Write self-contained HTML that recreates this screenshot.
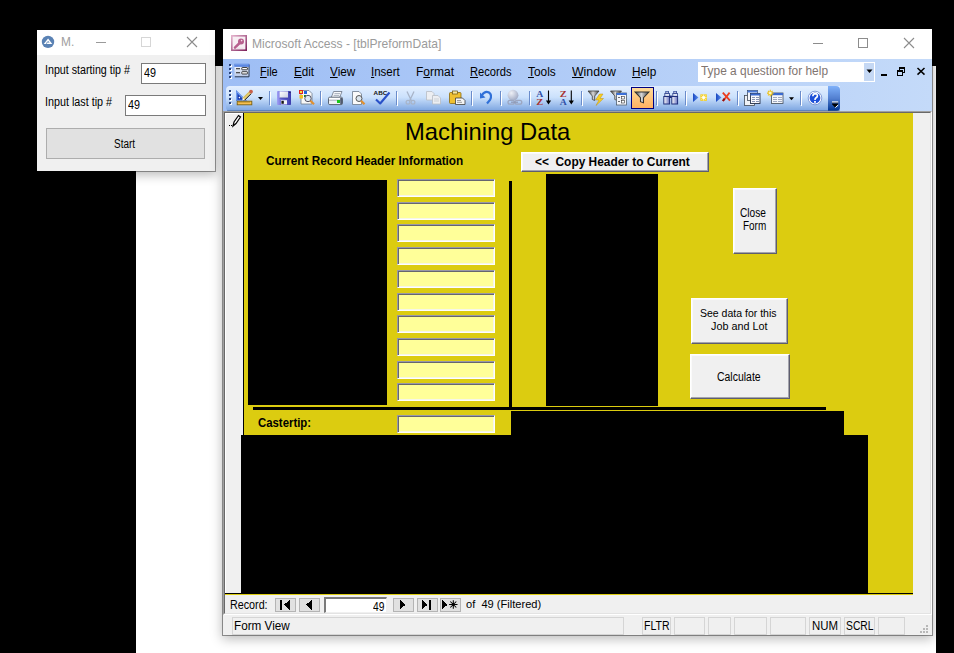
<!DOCTYPE html>
<html><head><meta charset="utf-8">
<style>
html{background:#000}
*{box-sizing:border-box;margin:0;padding:0}
body{width:954px;height:653px;background:#000;position:relative;overflow:hidden;font-family:"Liberation Sans",sans-serif}
.a{position:absolute}
.t{position:absolute;white-space:pre;line-height:1}
u{text-decoration:underline;text-underline-offset:1px}
</style></head><body>
<div class="a" style="left:136px;top:66px;width:800px;height:587px;background:#fff"></div>
<div class="a" style="left:36px;top:29px;width:180px;height:143px;background:#f0f0f0;background-clip:padding-box;border:1px solid rgba(0,0,0,.36);box-shadow:0 3px 10px rgba(0,0,0,.27)"></div>
<div class="a" style="left:37px;top:30px;width:178px;height:25px;background:#fff"></div>
<svg class="a" style="left:41px;top:35px;" width="14" height="14" viewBox="0 0 14 14"><circle cx="7" cy="6.9" r="6.2" fill="#5a82b4"/><path d="M2.7 9 L7.1 3.5 L11.3 9 Z" fill="#fff"/><path d="M5.6 7.6 L7.1 5.9 L8.6 7.6 Z" fill="#5a82b4"/><path d="M5.9 7.3 L5.4 9.3" stroke="#5a82b4" stroke-width="0.7"/></svg>
<span class="t" style="left:61.0px;top:35.63px;font-size:12.2px;color:#a0a0a0;transform:scaleX(0.9739);transform-origin:0 0;">M.</span>
<div class="a" style="left:96px;top:42px;width:10px;height:1px;background:#9a9a9a"></div>
<div class="a" style="left:141px;top:37px;width:10px;height:10px;border:1px solid #d6d6d6"></div>
<svg class="a" style="left:186px;top:36px;" width="12" height="12" viewBox="0 0 12 12"><path d="M1 1 L11 11 M11 1 L1 11" stroke="#8c8c8c" stroke-width="1.1"/></svg>
<span class="t" style="left:45.0px;top:63.75px;font-size:12.3px;color:#000;transform:scaleX(0.8693);transform-origin:0 0;">Input starting tip #</span>
<div class="a" style="left:141px;top:63px;width:65px;height:21px;background:#fff;border:1px solid #7a7a7a"></div>
<span class="t" style="left:144.1px;top:67.03px;font-size:12.2px;color:#000;transform:scaleX(0.8843);transform-origin:0 0;">49</span>
<span class="t" style="left:45.0px;top:95.95px;font-size:12.3px;color:#000;transform:scaleX(0.8749);transform-origin:0 0;">Input last tip #</span>
<div class="a" style="left:125px;top:95px;width:81px;height:21px;background:#fff;border:1px solid #7a7a7a"></div>
<span class="t" style="left:127.9px;top:98.83px;font-size:12.2px;color:#000;transform:scaleX(0.8843);transform-origin:0 0;">49</span>
<div class="a" style="left:46px;top:128px;width:159px;height:31px;background:#e1e1e1;border:1px solid #adadad"></div>
<span class="t" style="left:114.2px;top:137.90px;font-size:12px;color:#000;transform:scaleX(0.8286);transform-origin:0 0;">Start</span>
<div class="a" style="left:222px;top:28px;width:711px;height:608px;background:#f0f0f0;background-clip:padding-box;border:1px solid rgba(0,0,0,.38);box-shadow:0 3px 11px rgba(0,0,0,.27)"></div>
<div class="a" style="left:223px;top:29px;width:709px;height:30px;background:#fff"></div>
<svg class="a" style="left:231px;top:35px;" width="16" height="16" viewBox="0 0 16 16"><defs><linearGradient id="akf" x1="0" y1="0" x2="1" y2="1"><stop offset="0" stop-color="#e8b8d0"/><stop offset="1" stop-color="#7a1c58"/></linearGradient></defs><rect x="0" y="0" width="16" height="16" fill="url(#akf)"/><rect x="1.6" y="1.6" width="12.8" height="12.8" fill="#f7eef3"/><circle cx="10" cy="6.4" r="3" fill="#b8608e"/><path d="M9 7.6 L4 12.6" stroke="#b8608e" stroke-width="2.6" stroke-linecap="round"/><circle cx="10.6" cy="5.6" r="0.8" fill="#f4dde9"/><path d="M5.5 13.2 L12.5 13.2" stroke="#eadbe4" stroke-width="1"/></svg>
<span class="t" style="left:252.4px;top:37.93px;font-size:12.2px;color:#9b9b9b;transform:scaleX(0.9912);transform-origin:0 0;">Microsoft Access - [tblPreformData]</span>
<div class="a" style="left:813px;top:43px;width:10px;height:1px;background:#8c8c8c"></div>
<div class="a" style="left:858px;top:38px;width:10px;height:10px;border:1px solid #8c8c8c"></div>
<svg class="a" style="left:903px;top:37px;" width="12" height="12" viewBox="0 0 12 12"><path d="M1 1 L11 11 M11 1 L1 11" stroke="#8c8c8c" stroke-width="1.1"/></svg>
<div class="a" style="left:223px;top:59px;width:709px;height:52px;background:linear-gradient(to right,#9ebef5,#c4daf9)"></div>
<div class="a" style="left:229px;top:64px;width:2px;height:2px;background:#27417a;box-shadow:1px 1px 0 #fff"></div>
<div class="a" style="left:229px;top:68px;width:2px;height:2px;background:#27417a;box-shadow:1px 1px 0 #fff"></div>
<div class="a" style="left:229px;top:72px;width:2px;height:2px;background:#27417a;box-shadow:1px 1px 0 #fff"></div>
<div class="a" style="left:229px;top:76px;width:2px;height:2px;background:#27417a;box-shadow:1px 1px 0 #fff"></div>
<svg class="a" style="left:234px;top:63px;" width="16" height="15" viewBox="0 0 16 15"><defs><linearGradient id="fi" x1="0" y1="0" x2="0" y2="1"><stop offset="0" stop-color="#fff"/><stop offset="1" stop-color="#b8c8e8"/></linearGradient></defs><rect x="0.5" y="1" width="14.5" height="12.8" fill="url(#fi)"/><path d="M15 1.5 V13.8 H0.8" stroke="#27364e" stroke-width="1" fill="none"/><rect x="0.3" y="0.8" width="14.9" height="3" fill="#4878dc"/><rect x="1" y="1.4" width="13.5" height="0.9" fill="#8cb0f0"/><rect x="2" y="5" width="4" height="1.3" fill="#505050"/><rect x="2" y="9" width="4" height="1.3" fill="#505050"/><rect x="7.8" y="4.5" width="5.6" height="2.3" rx="0.5" fill="#fff" stroke="#2a2a2a" stroke-width="0.9"/><rect x="7.8" y="8.7" width="5.6" height="2.3" rx="0.5" fill="#fff" stroke="#2a2a2a" stroke-width="0.9"/></svg>
<span class="t" style="left:260.4px;top:65.90px;font-size:12px;color:#000;transform:scaleX(0.9153);transform-origin:0 0;"><u>F</u>ile</span>
<span class="t" style="left:293.8px;top:65.90px;font-size:12px;color:#000;transform:scaleX(0.9720);transform-origin:0 0;"><u>E</u>dit</span>
<span class="t" style="left:329.6px;top:65.90px;font-size:12px;color:#000;transform:scaleX(0.9808);transform-origin:0 0;"><u>V</u>iew</span>
<span class="t" style="left:371.1px;top:65.90px;font-size:12px;color:#000;transform:scaleX(0.9596);transform-origin:0 0;"><u>I</u>nsert</span>
<span class="t" style="left:416px;top:65.90px;font-size:12px;color:#000;">F<u>o</u>rmat</span>
<span class="t" style="left:470.4px;top:65.90px;font-size:12px;color:#000;transform:scaleX(0.9287);transform-origin:0 0;"><u>R</u>ecords</span>
<span class="t" style="left:528px;top:65.90px;font-size:12px;color:#000;transform:scaleX(0.9888);transform-origin:0 0;"><u>T</u>ools</span>
<span class="t" style="left:571.9px;top:65.90px;font-size:12px;color:#000;transform:scaleX(1.0262);transform-origin:0 0;"><u>W</u>indow</span>
<span class="t" style="left:631.8px;top:65.90px;font-size:12px;color:#000;transform:scaleX(0.9805);transform-origin:0 0;"><u>H</u>elp</span>
<div class="a" style="left:698px;top:62px;width:177px;height:20px;background:#fff"></div>
<div class="a" style="left:863px;top:62px;width:12px;height:20px;background:#c5d8f4;border:1px solid #fff"></div>
<svg class="a" style="left:866px;top:69px;" width="7" height="5" viewBox="0 0 7 5"><path d="M0.5 0.5 L6.5 0.5 L3.5 4 Z" fill="#000"/></svg>
<span class="t" style="left:700.6px;top:65.10px;font-size:12px;color:#80746f;transform:scaleX(0.9915);transform-origin:0 0;">Type a question for help</span>
<div class="a" style="left:881px;top:74px;width:6px;height:2px;background:#000"></div>
<svg class="a" style="left:896px;top:66px;" width="10" height="11" viewBox="0 0 10 11" shape-rendering="crispEdges"><rect x="3" y="1" width="6" height="2" fill="#000"/><rect x="3" y="1" width="1" height="4" fill="#000"/><rect x="8" y="1" width="1" height="6" fill="#000"/><rect x="6" y="6" width="3" height="1" fill="#000"/><rect x="1" y="4" width="6" height="6" fill="#c4daf9"/><rect x="1" y="4" width="6" height="2" fill="#000"/><rect x="1" y="4" width="1" height="6" fill="#000"/><rect x="6" y="4" width="1" height="6" fill="#000"/><rect x="1" y="9" width="6" height="1" fill="#000"/></svg>
<svg class="a" style="left:916px;top:67px;" width="10" height="9" viewBox="0 0 10 9"><path d="M1.5 1 L8.5 7.6 M8.5 1 L1.5 7.6" stroke="#000" stroke-width="1.5"/></svg>
<div class="a" style="left:226px;top:86px;width:614px;height:25px;border-radius:4px 0 0 4px;background:linear-gradient(to bottom,#e3efff 0%,#cbe1fc 45%,#7ba4e0 100%)"></div>
<div class="a" style="left:828px;top:86px;width:12px;height:25px;border-radius:0 4px 4px 0;background:linear-gradient(to bottom,#7fb1fa 0%,#527fd0 50%,#003591 100%)"></div>
<div class="a" style="left:227px;top:110px;width:612px;height:1px;background:#3b619c;opacity:.5"></div>
<div class="a" style="left:229px;top:90px;width:2px;height:2px;background:#27417a;box-shadow:1px 1px 0 #fff"></div>
<div class="a" style="left:229px;top:94px;width:2px;height:2px;background:#27417a;box-shadow:1px 1px 0 #fff"></div>
<div class="a" style="left:229px;top:98px;width:2px;height:2px;background:#27417a;box-shadow:1px 1px 0 #fff"></div>
<div class="a" style="left:229px;top:102px;width:2px;height:2px;background:#27417a;box-shadow:1px 1px 0 #fff"></div>
<svg class="a" style="left:830px;top:99px;" width="12" height="10" viewBox="0 0 12 10"><rect x="2" y="2.4" width="6.2" height="1.3" fill="#fff"/><rect x="2" y="3.7" width="6.2" height="0.8" fill="#000"/><path d="M1.8 5 L8.4 5 L5.1 8.4 Z" fill="#000"/><path d="M5.3 8.6 L8.2 6" stroke="#fff" stroke-width="1"/></svg>
<div class="a" style="left:269px;top:91px;width:1px;height:14px;background:#6a8ccb;box-shadow:1px 1px 0 #fff"></div>
<div class="a" style="left:320px;top:91px;width:1px;height:14px;background:#6a8ccb;box-shadow:1px 1px 0 #fff"></div>
<div class="a" style="left:396px;top:91px;width:1px;height:14px;background:#6a8ccb;box-shadow:1px 1px 0 #fff"></div>
<div class="a" style="left:471px;top:91px;width:1px;height:14px;background:#6a8ccb;box-shadow:1px 1px 0 #fff"></div>
<div class="a" style="left:500px;top:91px;width:1px;height:14px;background:#6a8ccb;box-shadow:1px 1px 0 #fff"></div>
<div class="a" style="left:529px;top:91px;width:1px;height:14px;background:#6a8ccb;box-shadow:1px 1px 0 #fff"></div>
<div class="a" style="left:581px;top:91px;width:1px;height:14px;background:#6a8ccb;box-shadow:1px 1px 0 #fff"></div>
<div class="a" style="left:656px;top:91px;width:1px;height:14px;background:#6a8ccb;box-shadow:1px 1px 0 #fff"></div>
<div class="a" style="left:685px;top:91px;width:1px;height:14px;background:#6a8ccb;box-shadow:1px 1px 0 #fff"></div>
<div class="a" style="left:737px;top:91px;width:1px;height:14px;background:#6a8ccb;box-shadow:1px 1px 0 #fff"></div>
<div class="a" style="left:800px;top:91px;width:1px;height:14px;background:#6a8ccb;box-shadow:1px 1px 0 #fff"></div>
<svg class="a" style="left:0;top:0" width="954" height="653" viewBox="0 0 954 653"><path d="M236 90 L236 101 L247 101 Z" fill="#3a6ad8"/><path d="M236.6 91.6 L236.6 100.4 L245.4 100.4 Z" fill="none" stroke="#90b8f8" stroke-width="0.7"/><path d="M237.8 94.4 L237.8 99.4 L242.8 99.4 Z" fill="#1a38a8"/><circle cx="239.4" cy="97.6" r="0.8" fill="#fff"/><path d="M243.2 99.3 L250.2 92.3" stroke="#e8d070" stroke-width="3"/><path d="M244.6 100.2 L251.2 93.6" stroke="#111" stroke-width="1"/><path d="M243.6 97.8 L249.8 91.6" stroke="#a89040" stroke-width="0.5"/><circle cx="251" cy="91.6" r="1.9" fill="#c8604a"/><path d="M242 100.6 L243.2 98.2 L244.6 99.6 Z" fill="#fff"/><rect x="237.2" y="101.2" width="14.6" height="3.6" fill="#f8c050" stroke="#7a6010" stroke-width="0.9"/><path d="M239 101.6v1.2M241 101.6v1.2M243 101.6v1.2M245 101.6v1.2M247 101.6v1.2M249 101.6v1.2" stroke="#8a6a10" stroke-width="0.8"/><path d="M258 97 L263 97 L260.5 100 Z" fill="#000"/><defs><linearGradient id="svg1" x1="0" x2="1"><stop offset="0" stop-color="#a0a0f4"/><stop offset=".35" stop-color="#6a6ad8"/><stop offset="1" stop-color="#3c3cae"/></linearGradient><linearGradient id="svl" x1="0" y1="0" x2="1" y2="1"><stop offset="0" stop-color="#fff"/><stop offset="1" stop-color="#c8cce0"/></linearGradient></defs><rect x="277" y="91" width="14" height="14" rx="0.8" fill="url(#svg1)"/><rect x="279.6" y="91.4" width="8.4" height="6.6" fill="url(#svl)"/><rect x="279.6" y="97.6" width="8.4" height="0.8" fill="#3a3aa0"/><rect x="281" y="100.2" width="6" height="4.2" fill="#f0f2f8"/><rect x="281.4" y="100.8" width="2.4" height="3" fill="#151515"/><rect x="289.4" y="92" width="1" height="1" fill="#222"/><path d="M301 90.5 H309 L312 93.5 V104 H301 Z" fill="#f8f8f8" stroke="#6c7a8c" stroke-width="0.8"/><rect x="299" y="90" width="4" height="4" fill="#e02020"/><rect x="300" y="91" width="2" height="2" fill="#f0e040"/><rect x="304" y="91" width="3" height="3" fill="#2060e0"/><rect x="299.5" y="95" width="3.5" height="3.5" fill="#f0c020"/><rect x="304" y="95" width="2" height="2" fill="#208020"/><circle cx="308" cy="98.5" r="3.2" fill="#dce6f0" stroke="#556" stroke-width="1"/><path d="M310.3 100.8 L314 104.3" stroke="#e09030" stroke-width="2.2"/><path d="M333.6 91.5 L342 91.5 L339.6 97.6 L331.2 97.6 Z" fill="#f6f8fb" stroke="#6a7484" stroke-width="0.8"/><path d="M334.5 93.6h5.5M333.7 95.4h5.5" stroke="#8a94a4" stroke-width="0.7"/><rect x="328.5" y="97.2" width="14" height="7.4" rx="1.3" fill="#eef1f6" stroke="#4e5868" stroke-width="0.9"/><rect x="329.2" y="97.9" width="12.6" height="1.6" fill="#fff"/><path d="M329.2 100.2h12.6" stroke="#7a8494" stroke-width="0.6"/><rect x="340.2" y="98" width="2" height="6" fill="#505a70"/><rect x="337" y="100" width="3" height="3" fill="#18c818"/><path d="M352.5 91.5 H359 L361.5 94 V104.5 H352.5 Z" fill="#fafafa" stroke="#6c7a8c" stroke-width="0.8"/><circle cx="359" cy="98.5" r="3" fill="#dde6ee" stroke="#555" stroke-width="1"/><path d="M361 100.7 L364.5 104.3" stroke="#e09030" stroke-width="2.2"/><text x="373.6" y="95" font-family="Liberation Sans" font-weight="700" font-size="6.2" fill="#111" textLength="13.6" lengthAdjust="spacingAndGlyphs">ABC</text><path d="M376 99.5 L380.2 103.5 L389.5 92.5" stroke="#2850c8" stroke-width="2.1" fill="none" stroke-linejoin="round"/><path d="M407 91.5 L411.5 101 M414 91.5 L409.5 101" stroke="#a8b4c8" stroke-width="1.3" fill="none"/><circle cx="408" cy="102.3" r="1.9" fill="none" stroke="#a8b4c8" stroke-width="1.2"/><circle cx="413" cy="102.3" r="1.9" fill="none" stroke="#a8b4c8" stroke-width="1.2"/><path d="M426.5 91.5 H432 L434 93.5 V100 H426.5 Z" fill="#eceef2" stroke="#b8bcc4" stroke-width="0.8"/><path d="M432.5 95.5 H438 L440.5 98 V104 H432.5 Z" fill="#eceef2" stroke="#b8bcc4" stroke-width="0.8"/><path d="M434 99h5M434 101h5" stroke="#c0c4cc" stroke-width="0.7"/><rect x="449.5" y="92.5" width="11.5" height="11" rx="1" fill="#f0c030" stroke="#8a6a10" stroke-width="0.8"/><rect x="452.5" y="91" width="5" height="3" fill="#f8e8a0" stroke="#6a5010" stroke-width="0.7"/><path d="M455.5 98 H462.5 L465 100.5 V104.5 H455.5 Z" fill="#f4f4f4" stroke="#404040" stroke-width="0.8"/><path d="M457 100.5h4M457 102.3h5" stroke="#777" stroke-width="0.7"/><path d="M482 95 Q485 90.5 489 92.5 Q492.5 95 490 100 L487 103.5" stroke="#3070d8" stroke-width="2.2" fill="none"/><path d="M480 92.5 L480 98.5 L485.5 97.5 Z" fill="#3070d8"/><defs><radialGradient id="glb" cx="0.35" cy="0.3" r="0.8"><stop offset="0" stop-color="#eef0f6"/><stop offset="1" stop-color="#9aa4c0"/></radialGradient></defs><circle cx="513" cy="95.2" r="5.4" fill="url(#glb)"/><rect x="508" y="100.3" width="6.4" height="3.8" rx="1.9" fill="none" stroke="#9ca6c0" stroke-width="1.3"/><rect x="515" y="100.3" width="6.8" height="3.8" rx="1.9" fill="none" stroke="#9ca6c0" stroke-width="1.3"/><path d="M511 102.2h7" stroke="#8e98b4" stroke-width="1.2"/><text x="536.2" y="96.7" font-family="Liberation Serif" font-weight="700" font-size="9" fill="#3050a8" textLength="7" lengthAdjust="spacingAndGlyphs">A</text><text x="536.2" y="104.7" font-family="Liberation Serif" font-weight="700" font-size="9" fill="#a83434" textLength="7" lengthAdjust="spacingAndGlyphs">Z</text><path d="M548.5 90.5 V103" stroke="#000" stroke-width="1.1"/><path d="M545.9 100.5 L551.1 100.5 L548.5 104.5 Z" fill="#000"/><text x="559.7" y="96.7" font-family="Liberation Serif" font-weight="700" font-size="9" fill="#a83434" textLength="7" lengthAdjust="spacingAndGlyphs">Z</text><text x="559.7" y="104.7" font-family="Liberation Serif" font-weight="700" font-size="9" fill="#3050a8" textLength="7" lengthAdjust="spacingAndGlyphs">A</text><path d="M571.3 90.5 V103" stroke="#000" stroke-width="1.1"/><path d="M568.6999999999999 100.5 L573.9 100.5 L571.3 104.5 Z" fill="#000"/><defs><linearGradient id="fg" x1="0" x2="1"><stop offset="0" stop-color="#303030"/><stop offset=".45" stop-color="#d8d8d8"/><stop offset="1" stop-color="#404040"/></linearGradient></defs><g transform="translate(588,91) scale(1.0)"><defs></defs><path d="M0 0 H11 L6.7 5 V9.5 L4.3 8.5 V5 Z" fill="url(#fg)" stroke="#404040" stroke-width="0.8"/></g><path d="M599.5 94 L595.5 100 L599 100 L596 105.5 L603.5 98.5 L600 98.5 L603 94 Z" fill="#f8d020" stroke="#c09010" stroke-width="0.5"/><g transform="translate(610.5,91) scale(1.0)"><defs></defs><path d="M0 0 H11 L6.7 5 V9.5 L4.3 8.5 V5 Z" fill="url(#fg)" stroke="#404040" stroke-width="0.8"/></g><rect x="616.5" y="93" width="10" height="12" fill="#f4f6fa" stroke="#506070" stroke-width="0.8"/><rect x="616.5" y="93" width="10" height="2" fill="#3a70d8"/><rect x="621.5" y="96.5" width="3" height="2.5" fill="#fff" stroke="#333" stroke-width="0.6"/><rect x="621.5" y="100.5" width="3" height="2.5" fill="#fff" stroke="#333" stroke-width="0.6"/><path d="M618 97.5h2M618 101.5h2" stroke="#333" stroke-width="0.7"/><defs><linearGradient id="og" x1="0" y1="0" x2="0" y2="1"><stop offset="0" stop-color="#ffdc9a"/><stop offset="1" stop-color="#ffb060"/></linearGradient></defs><rect x="631.5" y="87.5" width="22" height="21" fill="url(#og)" stroke="#000080" stroke-width="1"/><g transform="translate(635,92) scale(1.27,1.15)"><path d="M0 0 H11 L6.7 5 V9.5 L4.3 8.5 V5 Z" fill="url(#fg)" stroke="#303030" stroke-width="0.8"/></g><defs><linearGradient id="bg1" x1="0" x2="1"><stop offset="0" stop-color="#fff"/><stop offset="1" stop-color="#6a74c0"/></linearGradient></defs><rect x="665.3" y="91" width="3.6" height="2.8" fill="#3a52a0"/><rect x="666.4" y="91.7" width="1.3" height="1.2" fill="#fff"/><rect x="664.8" y="93.5" width="4.8" height="2.8" fill="#dfe6f4" stroke="#2a3e8a" stroke-width="0.8"/><rect x="663.8" y="96.5" width="5.8" height="7.5" fill="url(#bg1)" stroke="#1e2e7a" stroke-width="1"/><rect x="673.3" y="91" width="3.6" height="2.8" fill="#3a52a0"/><rect x="674.4" y="91.7" width="1.3" height="1.2" fill="#fff"/><rect x="672.8" y="93.5" width="4.8" height="2.8" fill="#dfe6f4" stroke="#2a3e8a" stroke-width="0.8"/><rect x="671.8" y="96.5" width="5.8" height="7.5" fill="url(#bg1)" stroke="#1e2e7a" stroke-width="1"/><rect x="669" y="95.5" width="2.8" height="2.5" fill="#1e2e7a"/><defs><linearGradient id="tri" x1="0" x2="1"><stop offset="0" stop-color="#1a48c0"/><stop offset="1" stop-color="#5a90f0"/></linearGradient></defs><path d="M693 93 L693 102 L698.5 97.5 Z" fill="url(#tri)"/><rect x="700.3" y="94.3" width="6.6" height="6.6" fill="#f4d030"/><g stroke="#fff8c8" stroke-width="0.8"><path d="M703.6 94.6 V100.6 M700.6 97.6 H706.6 M701.5 95.5 L705.7 99.7 M705.7 95.5 L701.5 99.7"/></g><circle cx="703.6" cy="97.6" r="1.3" fill="#fff"/><path d="M716 93 L716 102 L721.5 97.5 Z" fill="url(#tri)"/><path d="M722.8 92.6 L730 100.6" stroke="#e83a20" stroke-width="1.8"/><path d="M729.6 92.6 L723 101" stroke="#f04020" stroke-width="1.8"/><path d="M724.6 98.6 L722.8 101" stroke="#901010" stroke-width="2"/><rect x="744.5" y="95.5" width="10" height="10" fill="#f0f2f6" stroke="#404a58" stroke-width="0.8"/><rect x="747.5" y="90.5" width="10" height="10" fill="#f4f6fa" stroke="#404a58" stroke-width="0.8"/><rect x="747.5" y="90.5" width="10" height="2" fill="#4a7ad8"/><rect x="750.5" y="93.5" width="9.5" height="10" fill="#f8f8fc" stroke="#26324a" stroke-width="0.9"/><rect x="750.5" y="93.5" width="9.5" height="2" fill="#3a6ad0"/><path d="M752 97.5h3M756 97.5h3M752 99.5h3M756 99.5h3M752 101.5h3M756 101.5h3" stroke="#6a7aa0" stroke-width="0.8"/><rect x="771.5" y="93" width="11.5" height="10.5" fill="#f4f6fa" stroke="#404a58" stroke-width="0.8"/><rect x="771.5" y="93" width="11.5" height="2.2" fill="#3a6ad0"/><path d="M773 97.5h4M778 97.5h4M773 99.5h4M778 99.5h4M773 101.5h4M778 101.5h4" stroke="#8a96b0" stroke-width="0.8"/><g stroke="#f0c010" stroke-width="1.1"><path d="M770.3 89.8 V96.4 M767 93.1 H773.6 M768 90.8 L772.6 95.4 M772.6 90.8 L768 95.4"/></g><circle cx="770.3" cy="93.1" r="1.4" fill="#fff8c0"/><path d="M789 97.2 L794 97.2 L791.5 100.2 Z" fill="#000"/><circle cx="815" cy="98" r="6.8" fill="#fff" stroke="#5a7ac8" stroke-width="0.7"/><circle cx="815" cy="98" r="5.4" fill="#1e50d8"/><path d="M812.8 96.2 Q813 93.6 815.2 93.6 Q817.6 93.8 817.4 96 Q817.2 97.2 815.8 98 Q815 98.6 815 100" stroke="#fff" stroke-width="1.6" fill="none"/><rect x="814.1" y="101" width="1.8" height="1.8" fill="#fff"/></svg>
<div class="a" style="left:223px;top:111px;width:709px;height:504px;background:#f0f0f0;border-top:1px solid #a0a0a0;border-left:1px solid #a0a0a0;border-right:1px solid #fff;border-bottom:1px solid #fff"></div>
<div class="a" style="left:224px;top:112px;width:707px;height:502px;border-top:1px solid #696969;border-left:1px solid #696969;border-right:1px solid #e3e3e3;border-bottom:1px solid #e3e3e3"></div>
<div class="a" style="left:225px;top:113px;width:18px;height:480px;background:#f0f0f0;border-top:1px solid #fff;border-left:1px solid #fff"></div>
<div class="a" style="left:243px;top:113px;width:1px;height:480px;background:#000"></div>
<svg class="a" style="left:228px;top:114px;" width="14" height="14" viewBox="0 0 14 14" shape-rendering="crispEdges"><path d="M1 11h1v1h-1zM3 11h1v1h-1z" fill="#000"/><path d="M5 12 L6 8 L10.5 1.5 L12.5 3 L8 9.5 Z" fill="#fff" stroke="#000" stroke-width="1.2" shape-rendering="auto"/></svg>
<div class="a" style="left:244px;top:113px;width:669px;height:480px;background:#dccc10"></div>
<div class="a" style="left:225px;top:593px;width:688px;height:1px;background:#000"></div>
<div class="a" style="left:225px;top:594px;width:688px;height:1px;background:#dccc10"></div>
<span class="t" style="left:405.0px;top:119.87px;font-size:23.8px;color:#000;">Machining Data</span>
<span class="t" style="left:266.2px;top:153.95px;font-size:13px;font-weight:700;color:#000;transform:scaleX(0.9040);transform-origin:0 0;">Current Record Header Information</span>
<div class="a" style="left:521px;top:152px;width:188px;height:20px;background:#f0f0f0;border-top:1px solid #fff;border-left:1px solid #fff;border-right:1px solid #5e5e6e;border-bottom:1px solid #5e5e6e;box-shadow:inset -1px -1px 0 #a4a4ac,inset 1px 1px 0 #fafafa"></div>
<span class="t" style="left:534.6px;top:155.25px;font-size:13px;font-weight:700;color:#000;transform:scaleX(0.9158);transform-origin:0 0;">&lt;&lt;  Copy Header to Current</span>
<div class="a" style="left:248px;top:180px;width:139px;height:225px;background:#000"></div>
<div class="a" style="left:546px;top:174px;width:112px;height:232px;background:#000"></div>
<div class="a" style="left:509px;top:181px;width:3px;height:226px;background:#000"></div>
<div class="a" style="left:253px;top:407px;width:573px;height:3px;background:#000"></div>
<div class="a" style="left:511px;top:411px;width:333px;height:24px;background:#000"></div>
<div class="a" style="left:241px;top:435px;width:627px;height:158px;background:#000"></div>
<div class="a" style="left:397px;top:179px;width:98px;height:18px;background:#ffff99;border-top:1px solid #9898a8;border-left:1px solid #9898a8;border-right:1px solid #fff;border-bottom:1px solid #fff;box-shadow:inset 1px 1px 0 #66666e,inset -1px -1px 0 #f6f6e8"></div>
<div class="a" style="left:397px;top:202px;width:98px;height:18px;background:#ffff99;border-top:1px solid #9898a8;border-left:1px solid #9898a8;border-right:1px solid #fff;border-bottom:1px solid #fff;box-shadow:inset 1px 1px 0 #66666e,inset -1px -1px 0 #f6f6e8"></div>
<div class="a" style="left:397px;top:224px;width:98px;height:18px;background:#ffff99;border-top:1px solid #9898a8;border-left:1px solid #9898a8;border-right:1px solid #fff;border-bottom:1px solid #fff;box-shadow:inset 1px 1px 0 #66666e,inset -1px -1px 0 #f6f6e8"></div>
<div class="a" style="left:397px;top:247px;width:98px;height:18px;background:#ffff99;border-top:1px solid #9898a8;border-left:1px solid #9898a8;border-right:1px solid #fff;border-bottom:1px solid #fff;box-shadow:inset 1px 1px 0 #66666e,inset -1px -1px 0 #f6f6e8"></div>
<div class="a" style="left:397px;top:270px;width:98px;height:18px;background:#ffff99;border-top:1px solid #9898a8;border-left:1px solid #9898a8;border-right:1px solid #fff;border-bottom:1px solid #fff;box-shadow:inset 1px 1px 0 #66666e,inset -1px -1px 0 #f6f6e8"></div>
<div class="a" style="left:397px;top:293px;width:98px;height:18px;background:#ffff99;border-top:1px solid #9898a8;border-left:1px solid #9898a8;border-right:1px solid #fff;border-bottom:1px solid #fff;box-shadow:inset 1px 1px 0 #66666e,inset -1px -1px 0 #f6f6e8"></div>
<div class="a" style="left:397px;top:315px;width:98px;height:18px;background:#ffff99;border-top:1px solid #9898a8;border-left:1px solid #9898a8;border-right:1px solid #fff;border-bottom:1px solid #fff;box-shadow:inset 1px 1px 0 #66666e,inset -1px -1px 0 #f6f6e8"></div>
<div class="a" style="left:397px;top:338px;width:98px;height:18px;background:#ffff99;border-top:1px solid #9898a8;border-left:1px solid #9898a8;border-right:1px solid #fff;border-bottom:1px solid #fff;box-shadow:inset 1px 1px 0 #66666e,inset -1px -1px 0 #f6f6e8"></div>
<div class="a" style="left:397px;top:361px;width:98px;height:18px;background:#ffff99;border-top:1px solid #9898a8;border-left:1px solid #9898a8;border-right:1px solid #fff;border-bottom:1px solid #fff;box-shadow:inset 1px 1px 0 #66666e,inset -1px -1px 0 #f6f6e8"></div>
<div class="a" style="left:397px;top:383px;width:98px;height:18px;background:#ffff99;border-top:1px solid #9898a8;border-left:1px solid #9898a8;border-right:1px solid #fff;border-bottom:1px solid #fff;box-shadow:inset 1px 1px 0 #66666e,inset -1px -1px 0 #f6f6e8"></div>
<div class="a" style="left:397px;top:415px;width:98px;height:18px;background:#ffff99;border-top:1px solid #9898a8;border-left:1px solid #9898a8;border-right:1px solid #fff;border-bottom:1px solid #fff;box-shadow:inset 1px 1px 0 #66666e,inset -1px -1px 0 #f6f6e8"></div>
<span class="t" style="left:257.6px;top:415.75px;font-size:13px;font-weight:700;color:#000;transform:scaleX(0.8751);transform-origin:0 0;">Castertip:</span>
<div class="a" style="left:733px;top:188px;width:44px;height:66px;background:#f0f0f0;border-top:1px solid #fff;border-left:1px solid #fff;border-right:1px solid #5e5e6e;border-bottom:1px solid #5e5e6e;box-shadow:inset -1px -1px 0 #a4a4ac,inset 1px 1px 0 #fafafa"></div>
<span class="t" style="left:740.4px;top:207.39px;font-size:12.6px;color:#000;transform:scaleX(0.8071);transform-origin:0 0;">Close</span>
<span class="t" style="left:743.2px;top:220.49px;font-size:12.6px;color:#000;transform:scaleX(0.7892);transform-origin:0 0;">Form</span>
<div class="a" style="left:691px;top:298px;width:97px;height:46px;background:#f0f0f0;border-top:1px solid #fff;border-left:1px solid #fff;border-right:1px solid #5e5e6e;border-bottom:1px solid #5e5e6e;box-shadow:inset -1px -1px 0 #a4a4ac,inset 1px 1px 0 #fafafa"></div>
<span class="t" style="left:699.5px;top:308.47px;font-size:11.8px;color:#000;transform:scaleX(0.8902);transform-origin:0 0;">See data for this</span>
<span class="t" style="left:710.8px;top:320.97px;font-size:11.8px;color:#000;transform:scaleX(0.9161);transform-origin:0 0;">Job and Lot</span>
<div class="a" style="left:690px;top:354px;width:100px;height:45px;background:#f0f0f0;border-top:1px solid #fff;border-left:1px solid #fff;border-right:1px solid #5e5e6e;border-bottom:1px solid #5e5e6e;box-shadow:inset -1px -1px 0 #a4a4ac,inset 1px 1px 0 #fafafa"></div>
<span class="t" style="left:717.3px;top:370.57px;font-size:12.5px;color:#000;transform:scaleX(0.8366);transform-origin:0 0;">Calculate</span>
<span class="t" style="left:229.6px;top:599.14px;font-size:12.3px;color:#000;transform:scaleX(0.8730);transform-origin:0 0;">Record:</span>
<div class="a" style="left:275px;top:598px;width:21px;height:14px;background:#e1e1e1;border:1px solid #b4b4b4"></div>
<div class="a" style="left:299px;top:598px;width:21px;height:14px;background:#e1e1e1;border:1px solid #b4b4b4"></div>
<div class="a" style="left:393px;top:598px;width:21px;height:14px;background:#e1e1e1;border:1px solid #b4b4b4"></div>
<div class="a" style="left:417px;top:598px;width:21px;height:14px;background:#e1e1e1;border:1px solid #b4b4b4"></div>
<div class="a" style="left:440px;top:598px;width:21px;height:14px;background:#e1e1e1;border:1px solid #b4b4b4"></div>
<div class="a" style="left:324px;top:597px;width:63px;height:16px;background:#fff;border-top:2px solid #7a7a7a;border-left:2px solid #7a7a7a;border-right:1px solid #f0f0f0;border-bottom:1px solid #f0f0f0"></div>
<span class="t" style="left:372.8px;top:600.50px;font-size:12px;color:#000;transform:scaleX(0.8541);transform-origin:0 0;">49</span>
<svg class="a" style="left:0;top:0" width="954" height="653" viewBox="0 0 954 653" shape-rendering="crispEdges"><rect x="280" y="600" width="2" height="9.5" fill="#000"/><path d="M289.5 600 L289.5 609.5 L284 604.75 Z" fill="#000"/><path d="M311.5 600 L311.5 609.5 L306 604.75 Z" fill="#000"/><path d="M400 600 L400 609.5 L405.5 604.75 Z" fill="#000"/><path d="M422 600 L422 609.5 L427.5 604.75 Z" fill="#000"/><rect x="429" y="600" width="2" height="9.5" fill="#000"/><path d="M442 600 L442 609.5 L447.5 604.75 Z" fill="#000"/><path d="M453.3 600.3 V608.7 M449.1 604.5 H457.5 M450.3 601.5 L456.3 607.5 M456.3 601.5 L450.3 607.5" stroke="#000" stroke-width="1.05" shape-rendering="auto"/></svg>
<span class="t" style="left:465.6px;top:599.37px;font-size:11.8px;color:#000;transform:scaleX(0.9399);transform-origin:0 0;">of  49 (Filtered)</span>
<div class="a" style="left:232px;top:617px;width:392px;height:18px;border:1px solid #d5d5d5"></div>
<div class="a" style="left:642px;top:617px;width:29px;height:18px;border:1px solid #d5d5d5"></div>
<div class="a" style="left:674px;top:617px;width:31px;height:18px;border:1px solid #d5d5d5"></div>
<div class="a" style="left:708px;top:617px;width:23px;height:18px;border:1px solid #d5d5d5"></div>
<div class="a" style="left:734px;top:617px;width:33px;height:18px;border:1px solid #d5d5d5"></div>
<div class="a" style="left:770px;top:617px;width:36px;height:18px;border:1px solid #d5d5d5"></div>
<div class="a" style="left:809px;top:617px;width:32px;height:18px;border:1px solid #d5d5d5"></div>
<div class="a" style="left:844px;top:617px;width:31px;height:18px;border:1px solid #d5d5d5"></div>
<div class="a" style="left:878px;top:617px;width:27px;height:18px;border:1px solid #d5d5d5"></div>
<span class="t" style="left:233.6px;top:619.70px;font-size:12px;color:#000;transform:scaleX(0.9768);transform-origin:0 0;">Form View</span>
<span class="t" style="left:643.6px;top:619.70px;font-size:12px;color:#000;transform:scaleX(0.8794);transform-origin:0 0;">FLTR</span>
<span class="t" style="left:811.5px;top:619.60px;font-size:12px;color:#000;transform:scaleX(0.9514);transform-origin:0 0;">NUM</span>
<span class="t" style="left:846px;top:619.60px;font-size:12px;color:#000;transform:scaleX(0.8591);transform-origin:0 0;">SCRL</span>
<svg class="a" style="left:0;top:0" width="954" height="653" viewBox="0 0 954 653" shape-rendering="crispEdges"><rect x="926" y="625" width="2" height="2" fill="#b8b8b8"/><rect x="923" y="628" width="2" height="2" fill="#b8b8b8"/><rect x="926" y="628" width="2" height="2" fill="#b8b8b8"/><rect x="920" y="631" width="2" height="2" fill="#b8b8b8"/><rect x="923" y="631" width="2" height="2" fill="#b8b8b8"/><rect x="926" y="631" width="2" height="2" fill="#b8b8b8"/></svg>
</body></html>
